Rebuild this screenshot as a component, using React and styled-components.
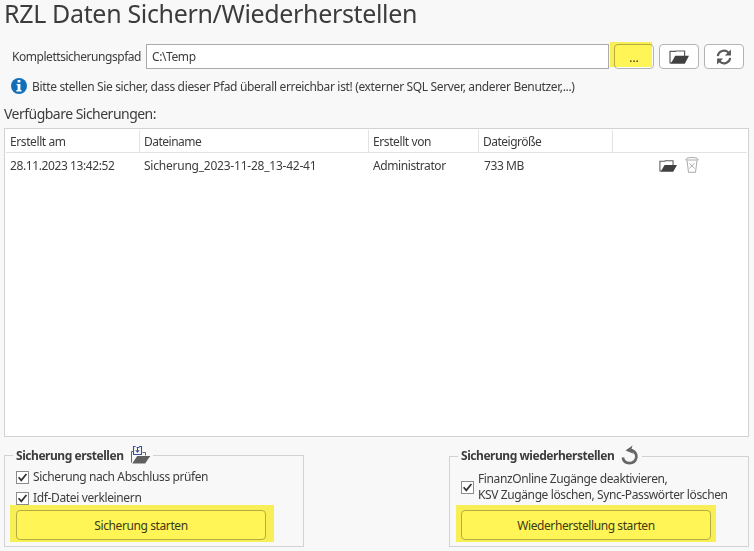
import React from "react";
import styled, { createGlobalStyle } from "styled-components";

const GlobalStyle = createGlobalStyle`
  * { box-sizing: border-box; }
  body { margin: 0; background: #f8f8f8; }
  button, input { font: inherit; color: inherit; }
`;

const Window = styled.main`
  width: 754px;
  height: 551px;
  padding: 0 5px 0 4px;
  background: #f8f8f8;
  color: #3c3c3c;
  font-family: "Noto Sans", "Open Sans", sans-serif;
  font-size: 12px;
  line-height: 16px;
  white-space: nowrap;
`;

const Title = styled.h1`
  margin: 0;
  height: 44px;
  font-size: 25px;
  font-weight: 400;
  line-height: 26px;
`;

const Label = styled.span`
  letter-spacing: ${(p) => p.$track || 0}px;
`;

const PathRow = styled.div`
  display: flex;
  height: 24px;
  padding-left: 8px;
`;

const PathLabel = styled.label`
  width: 134px;
  padding-top: 5px;
`;

const PathInput = styled.input`
  width: 463px;
  height: 25px;
  margin-right: 5px;
  padding: 0 5px 1px;
  border: 1px solid #ababab;
  background: #fff;
  letter-spacing: -0.4px;
  outline: none;
`;

const Button = styled.button`
  position: relative;
  display: flex;
  align-items: center;
  justify-content: center;
  width: ${(p) => p.$width}px;
  height: ${(p) => p.$height}px;
  padding: ${(p) => p.$drop || 0}px 0 0;
  border: 1px solid #b4b4b4;
  border-radius: 4px;
  background: #fff;
`;

const ToolButton = styled(Button).attrs({ $width: 40, $height: 25 })`
  margin-right: 5px;
`;

const Marker = styled.i`
  position: absolute;
  inset: ${(p) => p.$inset};
  background: #fff557;
  mix-blend-mode: multiply;
  pointer-events: none;
`;

const Notice = styled.div`
  display: flex;
  gap: 5px;
  height: 36px;
  padding: 10px 0 0 7px;
  line-height: 18px;
`;

const Caption = styled.div`
  height: 24px;
  font-size: 14px;
  line-height: 20px;
`;

const Table = styled.section`
  height: 309px;
  padding: 1px;
  border: 1px solid #d2d2d2;
  background: #fff;
`;

const Row = styled.div`
  display: grid;
  grid-template-columns: 134px 229px 110px 134px 1fr;
`;

const HeaderRow = styled(Row)`
  height: 23px;
  border-bottom: 1px solid #e2e2e2;
`;

const HeaderCell = styled.div`
  padding: 4px 0 0 4px;
  border-right: ${(p) => (p.$last ? 0 : 1)}px solid #e2e2e2;
`;

const DataRow = styled(Row)`
  height: 25px;
`;

const Cell = styled.div`
  padding: 5px 0 0 ${(p) => p.$indent || 4}px;
`;

const Actions = styled.div`
  display: flex;
  align-items: flex-start;
  gap: 8px;
  padding: 4px 0 0 46px;

  svg:first-child { margin-top: 3px; }
`;

const Groups = styled.div`
  display: flex;
  justify-content: space-between;
  padding-top: 8px;
`;

const Group = styled.section`
  width: 300px;
`;

const GroupHeader = styled.header`
  display: flex;
  height: 22px;
`;

const Edge = styled.div`
  width: ${(p) => (p.$fill ? "auto" : "9px")};
  flex: ${(p) => (p.$fill ? 1 : "none")};
  height: ${(p) => 22 - p.$top}px;
  margin-top: ${(p) => p.$top}px;
  border-top: 1px solid #d2d2d2;
  border-left: ${(p) => (p.$fill ? 0 : 1)}px solid #d2d2d2;
  border-right: ${(p) => (p.$fill ? 1 : 0)}px solid #d2d2d2;
`;

const GroupTitle = styled.h2`
  display: flex;
  margin: 0 3px;
  gap: 7px;
  font-size: 12px;
  font-weight: 700;
  line-height: 22px;
`;

const GroupBody = styled.div`
  height: 80px;
  padding-left: 11px;
  border: solid #d2d2d2;
  border-width: 0 1px 1px;
`;

const Options = styled.div`
  height: 43px;
  padding-top: ${(p) => p.$top}px;
`;

const Option = styled.label`
  display: flex;
  align-items: flex-start;
  gap: 4px;
  height: 21px;
  line-height: 16px;
`;

const CheckFrame = styled.span`
  display: flex;
  width: 13px;
  height: 13px;
  margin-top: ${(p) => p.$top}px;
  border: 1px solid #8c8c8c;
  background: #fff;
`;

const Check = ({ top = 0 }) => (
  <CheckFrame $top={top}>
    <svg width="11" height="11" viewBox="0 0 11 11">
      <path d="M1.6 5.2 4.3 8.4 9.4 2" fill="none" stroke="#303030" strokeWidth="1.7" />
    </svg>
  </CheckFrame>
);

const FolderIcon = ({ width = 20, height = 14 }) => (
  <svg width={width} height={height} viewBox="0 0 20 14" preserveAspectRatio="none">
    <path d="M3 12.8H1V1.4H6.5L7 1H15.6V6" fill="none" stroke="#5c5c5c" strokeWidth="1.2" />
    <path d="M1.8 13.8 6.2 5.8H20L15.8 13.8Z" fill="#404040" />
  </svg>
);

const RefreshIcon = () => (
  <svg width="16" height="16" viewBox="0 0 16 16">
    <path d="M1.8 7.2A6.3 6.2 0 0 1 12.4 3.4M14.2 8.8A6.3 6.2 0 0 1 3.6 12.6" fill="none" stroke="#5a5a5a" strokeWidth="2.1" />
    <path d="M14.9 .6V6.6H8.9ZM1.1 15.4V9.4H7.1Z" fill="#555" />
  </svg>
);

const InfoIcon = () => (
  <svg width="16" height="16" viewBox="0 0 16 16">
    <circle cx="8" cy="8" r="8" fill="#126fb8" />
    <path d="M6.6 2H9.4V4.5H6.6ZM5.6 6H9.4V12H10.5V13.4H5.4V12H6.6V7.2H5.6Z" fill="#fff" />
  </svg>
);

const TrashIcon = () => (
  <svg width="14" height="16" viewBox="0 0 14 16" fill="none" stroke="#aaa">
    <path d="M.7 3 2 1.2C4 .3 10 .3 12 1.2L13.3 3ZM2 3.5 3.5 15.3H10.5L12 3.5" />
    <path d="M4.3 6.3 9.5 11.3M9.5 6.3 4.3 11.3" />
  </svg>
);

const BackupIcon = () => (
  <svg width="19" height="19" viewBox="0 0 19 19">
    <path d="M.5 17.5V6.5H2M11.5 7.5H14.5V10.5" fill="none" stroke="#666" />
    <path d="M1.2 18.5 6.2 11H19.2L14.2 18.5Z" fill="#606060" />
    <path d="M4.6 1.5H2.5V9.5H10.5V1.5H8" fill="none" stroke="#3c50a0" strokeWidth="1.1" />
    <path d="M5.6 2.5H8.4M6.5 2.5V6.5" fill="none" stroke="#3c50a0" />
    <path d="M4.2 5.2H8.8L6.5 8Z" fill="#3c50a0" />
  </svg>
);

const RestoreIcon = () => (
  <svg width="18" height="20" viewBox="0 0 18 20">
    <path d="M1.8 12.5C3 19.8 13.8 20 15.3 12.5C15.8 7.2 11 4 7 5.2" fill="none" stroke="#666" strokeWidth="2.7" />
    <path d="M4.5 5.6 11.5 .5 10.2 5 12.5 8.8Z" fill="#666" />
  </svg>
);

const columns = [
  ["Erstellt am", -0.4],
  ["Dateiname", -0.5],
  ["Erstellt von", -0.4],
  ["Dateigröße", -0.5],
  ["", 0],
];

export default function App() {
  return (
    <>
      <GlobalStyle />
      <Window>
        <Title><Label $track={-0.34}>RZL Daten Sichern/Wiederherstellen</Label></Title>
        <PathRow>
          <PathLabel htmlFor="path"><Label $track={-0.46}>Komplettsicherungspfad</Label></PathLabel>
          <PathInput id="path" defaultValue="C:\Temp" />
          <ToolButton $drop={2}>...<Marker $inset="-3px 1px 1px -5px" /></ToolButton>
          <ToolButton aria-label="Ordner öffnen" $drop={1}><FolderIcon /></ToolButton>
          <ToolButton aria-label="Aktualisieren"><RefreshIcon /></ToolButton>
        </PathRow>
        <Notice>
          <InfoIcon />
          <Label $track={-0.344}>Bitte stellen Sie sicher, dass dieser Pfad überall erreichbar ist! (externer SQL Server, anderer Benutzer,...)</Label>
        </Notice>
        <Caption><Label $track={-0.52}>Verfügbare Sicherungen:</Label></Caption>
        <Table>
          <HeaderRow>
            {columns.map(([name, track], i) => (
              <HeaderCell key={i} $last={i === 4}><Label $track={track}>{name}</Label></HeaderCell>
            ))}
          </HeaderRow>
          <DataRow>
            <Cell><Label $track={-0.4}>28.11.2023 13:42:52</Label></Cell>
            <Cell><Label $track={-0.23}>Sicherung_2023-11-28_13-42-41</Label></Cell>
            <Cell><Label $track={-0.4}>Administrator</Label></Cell>
            <Cell $indent={5}><Label $track={-0.4}>733 MB</Label></Cell>
            <Actions>
              <FolderIcon width={18} height={12} />
              <TrashIcon />
            </Actions>
          </DataRow>
        </Table>
        <Groups>
          <Group>
            <GroupHeader>
              <Edge $top={10} />
              <GroupTitle><Label $track={-0.45}>Sicherung erstellen</Label><BackupIcon /></GroupTitle>
              <Edge $top={10} $fill />
            </GroupHeader>
            <GroupBody>
              <Options $top={2}>
                <Option><Check top={2} /><Label $track={-0.4}>Sicherung nach Abschluss prüfen</Label></Option>
                <Option><Check top={2} /><Label $track={-0.36}>Idf-Datei verkleinern</Label></Option>
              </Options>
              <Button $width={250} $height={30} $drop={2}><Label $track={-0.4}>Sicherung starten</Label><Marker $inset="-6px -9px -3px -7px" /></Button>
            </GroupBody>
          </Group>
          <Group>
            <GroupHeader>
              <Edge $top={11} />
              <GroupTitle><Label $track={-0.45}>Sicherung wiederherstellen</Label><RestoreIcon /></GroupTitle>
              <Edge $top={11} $fill />
            </GroupHeader>
            <GroupBody>
              <Options $top={4}>
                <Option><Check top={10} /><Label $track={-0.39}>FinanzOnline Zugänge deaktivieren,<br />KSV Zugänge löschen, Sync-Passwörter löschen</Label></Option>
              </Options>
              <Button $width={250} $height={30} $drop={2}><Label $track={-0.42}>Wiederherstellung starten</Label><Marker $inset="-6px -6px -3px -6px" /></Button>
            </GroupBody>
          </Group>
        </Groups>
      </Window>
    </>
  );
}
